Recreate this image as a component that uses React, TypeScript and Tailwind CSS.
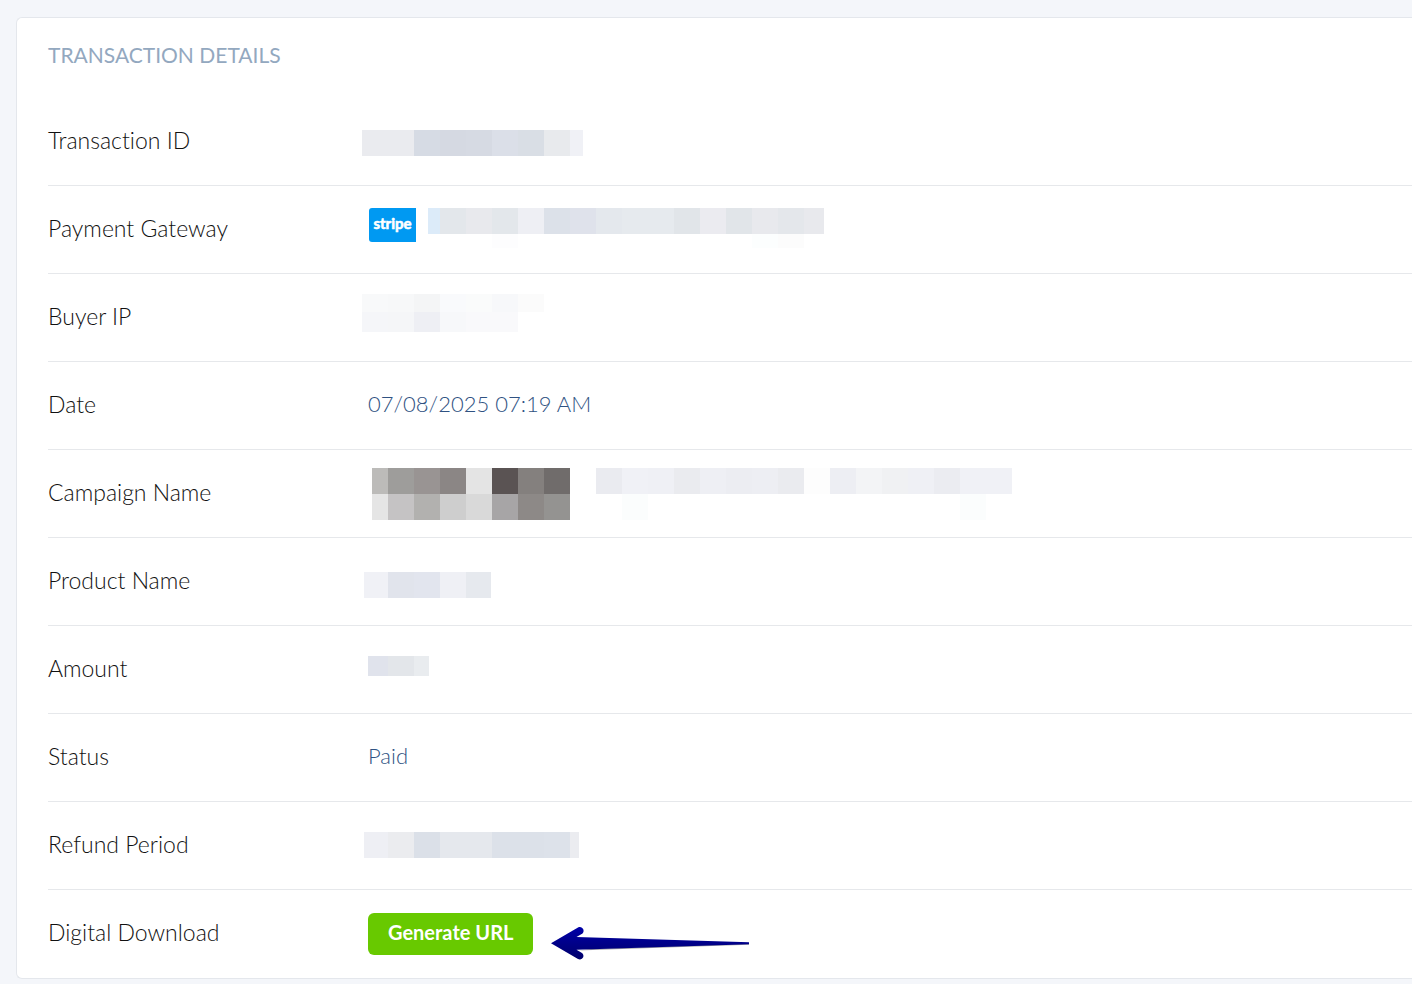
import React from 'react';

interface MosaicProps {
  rows: string[][];
}

interface DetailRowProps {
  label: string;
  valueClass?: string;
  children: React.ReactNode;
}

// Pixelated blocks covering private values, one list of cells per line
const transactionIdMosaic = [
  [
    'w-13 h-6.5 bg-[#eaebef]',
    'w-6.5 h-6.5 bg-[#d6dbe4]',
    'w-6.5 h-6.5 bg-[#d5d9e2]',
    'w-6.5 h-6.5 bg-[#d6dae3]',
    'w-6.5 h-6.5 bg-[#dbdfe8]',
    'w-6.5 h-6.5 bg-[#d9dee5]',
    'w-6.5 h-6.5 bg-[#e8eaed]',
    'w-[13px] h-6.5 bg-[#f0f1f6]',
  ],
];

const gatewayMosaic = [
  [
    'w-3 h-6.5 bg-[#dcebf9]',
    'w-6.5 h-6.5 bg-[#e3e7eb]',
    'w-6.5 h-6.5 bg-[#e8e9ed]',
    'w-6.5 h-6.5 bg-[#e3e7eb]',
    'w-6.5 h-6.5 bg-[#eeeff4]',
    'w-6.5 h-6.5 bg-[#dce1e9]',
    'w-6.5 h-6.5 bg-[#dfe2eb]',
    'w-6.5 h-6.5 bg-[#e4e8ed]',
    'w-13 h-6.5 bg-[#e6eaee]',
    'w-6.5 h-6.5 bg-[#e1e5e9]',
    'w-6.5 h-6.5 bg-[#ebebf0]',
    'w-6.5 h-6.5 bg-[#e1e5e9]',
    'w-6.5 h-6.5 bg-[#e8e9ed]',
    'w-6.5 h-6.5 bg-[#e4e7eb]',
    'w-5 h-6.5 bg-[#e8e9ed]',
  ],
  [
    'w-16 h-3.5',
    'w-6.5 h-3.5 bg-[#fdfdfe]',
    'w-58.5 h-3.5',
    'w-6.5 h-3.5 bg-[#fcfefe]',
    'w-6.5 h-3.5 bg-[#fcfcfc]',
  ],
];

const buyerIpMosaic = [
  [
    'w-6.5 h-4.5 bg-[#f8f9fa]',
    'w-6.5 h-4.5 bg-[#f7f8f9]',
    'w-6.5 h-4.5 bg-[#f4f5f6]',
    'w-6.5 h-4.5 bg-[#f9fafc]',
    'w-6.5 h-4.5 bg-[#fafbfb]',
    'w-6.5 h-4.5 bg-[#f7f8fa]',
    'w-6.5 h-4.5 bg-[#fbfbfb]',
  ],
  [
    'w-6.5 h-5 bg-[#f5f6f9]',
    'w-6.5 h-5 bg-[#f5f6f8]',
    'w-6.5 h-5 bg-[#eeeff4]',
    'w-6.5 h-5 bg-[#f7f8fa]',
    'w-13 h-5 bg-[#f9f9fb]',
  ],
];

const campaignMosaic = [
  [
    'w-4 h-6.5 bg-[#bcbbb9]',
    'w-6.5 h-6.5 bg-[#9e9d9b]',
    'w-6.5 h-6.5 bg-[#999493]',
    'w-6.5 h-6.5 bg-[#8b8685]',
    'w-6.5 h-6.5 bg-[#e4e4e4]',
    'w-6.5 h-6.5 bg-[#5a5353]',
    'w-6.5 h-6.5 bg-[#84807e]',
    'w-6.5 h-6.5 bg-[#706c6b]',
    'w-6.5 h-6.5',
    'w-6.5 h-6.5 bg-[#eaebf0]',
    'w-6.5 h-6.5 bg-[#f0f1f6]',
    'w-6.5 h-6.5 bg-[#eff0f5]',
    'w-6.5 h-6.5 bg-[#eaebef]',
    'w-6.5 h-6.5 bg-[#eeeff4]',
    'w-6.5 h-6.5 bg-[#ecedf2]',
    'w-6.5 h-6.5 bg-[#edeef3]',
    'w-6.5 h-6.5 bg-[#eaebef]',
    'w-6.5 h-6.5 bg-[#fdfdfd]',
    'w-6.5 h-6.5 bg-[#edeef3]',
    'w-6.5 h-6.5 bg-[#f3f4f6]',
    'w-6.5 h-6.5 bg-[#f0f1f3]',
    'w-6.5 h-6.5 bg-[#eff0f5]',
    'w-6.5 h-6.5 bg-[#ebecf1]',
    'w-13 h-6.5 bg-[#f0f1f6]',
  ],
  [
    'w-4 h-6.5 bg-[#e5e5e5]',
    'w-6.5 h-6.5 bg-[#c5c3c4]',
    'w-6.5 h-6.5 bg-[#b2b1af]',
    'w-6.5 h-6.5 bg-[#cecece]',
    'w-6.5 h-6.5 bg-[#d9d9d9]',
    'w-6.5 h-6.5 bg-[#a7a5a6]',
    'w-6.5 h-6.5 bg-[#8d8987]',
    'w-6.5 h-6.5 bg-[#949391]',
    'w-13 h-6.5',
    'w-6.5 h-6.5 bg-[#fbfdfd]',
    'w-78 h-6.5',
    'w-6.5 h-6.5 bg-[#fbfdfd]',
  ],
];

const productMosaic = [
  [
    'w-6 h-6.5 bg-[#f0f1f6]',
    'w-6.5 h-6.5 bg-[#e1e4ec]',
    'w-6.5 h-6.5 bg-[#e2e5ee]',
    'w-6.5 h-6.5 bg-[#eff0f5]',
    'w-[25px] h-6.5 bg-[#e6e9ee]',
  ],
];

const amountMosaic = [
  ['w-5 h-5 bg-[#e0e3ec]', 'w-6.5 h-5 bg-[#e3e6ea]', 'w-[15px] h-5 bg-[#e9ecef]'],
];

const refundMosaic = [
  [
    'w-6 h-6.5 bg-[#eeeff4]',
    'w-6.5 h-6.5 bg-[#ebecef]',
    'w-6.5 h-6.5 bg-[#dbe0e8]',
    'w-13 h-6.5 bg-[#e5e8ed]',
    'w-13 h-6.5 bg-[#dce1e9]',
    'w-6.5 h-6.5 bg-[#dde2ea]',
    'w-[9px] h-6.5 bg-[#ebecf0]',
  ],
];

const Mosaic: React.FC<MosaicProps> = ({ rows }) => (
  <div>
    {rows.map((cells, i) => (
      <div key={i} className="flex">
        {cells.map((cell, j) => (
          <span key={j} className={`shrink-0 ${cell}`} />
        ))}
      </div>
    ))}
  </div>
);

const StripeLogo: React.FC = () => (
  <svg width="48" height="36" viewBox="0 0 48 36" className="shrink-0" role="img" aria-label="stripe">
    <path d="M4 0H48V34H4Q1 34 1 31V3Q1 0 4 0Z" fill="#0099f2" />
    <text
      x="24.5"
      y="21"
      textAnchor="middle"
      fill="#fff"
      stroke="#fff"
      strokeWidth="0.6"
      className="text-[15px] font-bold"
    >
      stripe
    </text>
  </svg>
);

const Arrow: React.FC = () => (
  <svg width="198" height="36" viewBox="0 0 198 36" className="mt-3 shrink-0" aria-hidden="true">
    <defs>
      <linearGradient id="arrow-fill" x1="0" y1="0" x2="0" y2="1">
        <stop offset="0" stopColor="#0000a8" />
        <stop offset="1" stopColor="#00006a" />
      </linearGradient>
    </defs>
    <path d="M27 25.5L198 19.8V18L40 24Z" fill="#000" opacity="0.35" />
    <path
      d="M0 18.3L27 2.5C31 .4 34.5 5.500 31.5 8.500L25.5 12L198 17.3V19.3L25.5 24.7L31 28C34.5 31 31 36 27 34Z"
      fill="url(#arrow-fill)"
    />
  </svg>
);

const DetailRow: React.FC<DetailRowProps> = ({ label, valueClass = 'align-middle pb-1 pl-1.5', children }) => (
  <tr className="group">
    <th
      scope="row"
      className="h-22 w-[314px] border-b border-[#e6e8eb] pb-1 text-left align-middle text-[23px] font-light text-[#111111] group-last:border-b-0"
    >
      {label}
    </th>
    <td
      className={`h-22 border-b border-[#e6e8eb] text-[22px] font-light text-[#2f5282] group-last:border-b-0 ${valueClass}`}
    >
      {children}
    </td>
  </tr>
);

const App: React.FC = () => {
  return (
    <main className="min-h-screen overflow-hidden bg-[#f4f6fa] pt-[17px] pl-4 font-['Lato',sans-serif] [font-variant-ligatures:none]">
      <section className="rounded-l-md border-y border-l border-[#e4e7ec] bg-white pl-[31px]">
        <h2 className="pt-[23px] pb-[29px] text-[21px] leading-7 text-[#93a8bf]">TRANSACTION DETAILS</h2>

        <table className="w-full table-fixed border-separate border-spacing-0 leading-8">
          <tbody>
            <DetailRow label="Transaction ID" valueClass="align-top pt-8">
              <Mosaic rows={transactionIdMosaic} />
            </DetailRow>

            <DetailRow label="Payment Gateway" valueClass="align-top pt-[22px] pl-1.5">
              <div className="flex items-start gap-3">
                <StripeLogo />
                <Mosaic rows={gatewayMosaic} />
              </div>
            </DetailRow>

            <DetailRow label="Buyer IP" valueClass="align-top pt-5">
              <Mosaic rows={buyerIpMosaic} />
            </DetailRow>

            <DetailRow label="Date">07/08/2025 07:19 AM</DetailRow>

            <DetailRow label="Campaign Name" valueClass="align-top pt-[18px] pl-2.5">
              <Mosaic rows={campaignMosaic} />
            </DetailRow>

            <DetailRow label="Product Name" valueClass="align-top pt-[34px] pl-0.5">
              <Mosaic rows={productMosaic} />
            </DetailRow>

            <DetailRow label="Amount" valueClass="align-top pt-[30px] pl-1.5">
              <Mosaic rows={amountMosaic} />
            </DetailRow>

            <DetailRow label="Status">Paid</DetailRow>

            <DetailRow label="Refund Period" valueClass="align-top pt-[30px] pl-0.5">
              <Mosaic rows={refundMosaic} />
            </DetailRow>

            <DetailRow label="Digital Download" valueClass="align-top pt-[23px] pl-1.5">
              <div className="flex items-start gap-[18px]">
                <button
                  type="button"
                  className="h-[42px] rounded-md bg-[#68c900] px-5 pb-1 text-[20px] leading-6 font-bold text-white"
                >
                  Generate URL
                </button>
                <Arrow />
              </div>
            </DetailRow>
          </tbody>
        </table>
      </section>
    </main>
  );
};

export default App;
